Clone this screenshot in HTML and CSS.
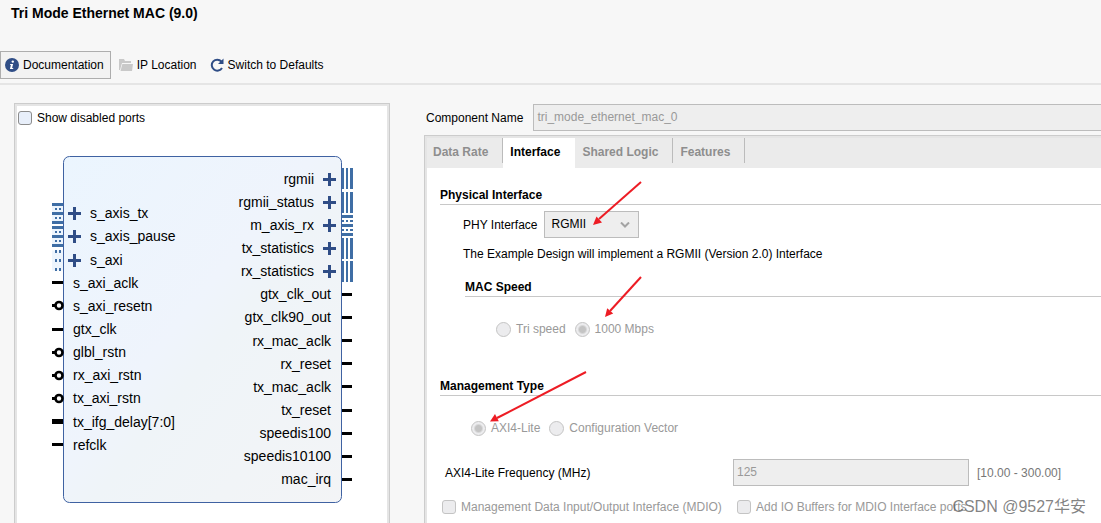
FILE: index.html
```
<!DOCTYPE html>
<html lang="en">
<head>
<meta charset="utf-8">
<title>Tri Mode Ethernet MAC (9.0)</title>
<link rel="stylesheet" href="styles.css">
</head>
<body>
<header class="header">
  <h1 class="title">Tri Mode Ethernet MAC (9.0)</h1>
  <nav class="toolbar">
    <button class="tool tool-active" type="button">
      <svg class="icon" viewBox="0 0 14 14"><circle cx="7" cy="7" r="7" fill="#2f4d86"/><circle cx="7.8" cy="3.6" r="1.2" fill="#fff"/><path d="M5.3 6h2.8l-1 4h1.1v1H4.9l1-4H5z" fill="#fff"/></svg>
      Documentation
    </button>
    <button class="tool" type="button">
      <svg class="icon" viewBox="0 0 14 14"><path d="M0 12V1h5l1 2h6v2H3L1 12z" fill="#c9c9c9"/><path d="M3.4 6H14l-1 7H1.500z" fill="#c9c9c9"/></svg>
      IP Location
    </button>
    <button class="tool" type="button">
      <svg class="icon" viewBox="0 0 14 14"><path d="M11.400 3.500A5.500 5.500 0 1 0 12 10" fill="none" stroke="#2f4d86" stroke-width="2"/><path d="M13.500 0.500V6H8z" fill="#2f4d86"/></svg>
      Switch to Defaults
    </button>
  </nav>
</header>

<main class="main">
  <section class="ports-panel">
    <label class="check ports-toggle"><input type="checkbox"> Show disabled ports</label>
    <svg class="diagram" viewBox="0 0 370 380" role="img" aria-label="Block symbol">
      <defs>
        <linearGradient id="block" x1="0" y1="0" x2="1" y2="1">
          <stop offset="0" stop-color="#ebf5fe"/><stop offset="0.45" stop-color="#eff4fc"/><stop offset="0.55" stop-color="#eff4f8"/><stop offset="1" stop-color="#f3f4f6"/>
        </linearGradient>
        <g id="plus"><path d="M-6.500 0H6.500M0 -6.500V6.500" stroke="#2f4d86" stroke-width="3"/></g>
        <g id="pin"><path d="M0 0H10" stroke="#000" stroke-width="3"/></g>
        <g id="inverted"><path d="M0 0H4" stroke="#000" stroke-width="3"/><circle cx="7" cy="0" r="3.500" fill="#fff" stroke="#000" stroke-width="2.600"/></g>
        <g id="stream"><path d="M0 -10.500h11v21H0z" fill="#edf5fd"/><path d="M0 -9h11M0 0h11M0 9h11" stroke="#3f6ea5" stroke-width="3"/><path d="M3 -4.500h6M3 4.500h6" stroke="#3f6ea5" stroke-width="2" stroke-dasharray="2 2"/></g>
        <g id="mapped"><path d="M0 -10h11v20H0z" fill="#edf5fd"/><path d="M3 -9h6M3 0h6M3 9h6" stroke="#3f6ea5" stroke-width="3" stroke-dasharray="2 2"/></g>
        <g id="bus"><path d="M0 -10.500h2v21H0zM4 -10.500h2v21H4zM8 -10.500h3v21H8z" fill="#3f6ea5"/></g>
        <g id="stream-out"><path d="M0 -9h11M0 0h11M0 9h11" stroke="#3f6ea5" stroke-width="3"/><path d="M0 -4.500h2M4 -4.500h2M8 -4.500h3M0 4.500h2M4 4.500h2M8 4.500h3" stroke="#3f6ea5" stroke-width="2"/></g>
      </defs>
      <rect x="46.500" y="28.500" width="278" height="346" rx="6" fill="url(#block)" stroke="#3f62a2"/>
      <use href="#stream" x="35" y="85.500"/><use href="#stream" x="35" y="108.500"/><use href="#mapped" x="35" y="132.500"/>
      <use href="#plus" x="57.500" y="85.500"/><use href="#plus" x="57.500" y="108.500"/><use href="#plus" x="57.500" y="132.500"/>
      <path d="M35 154.500h11M35 201.500h11M35 316.500h11" stroke="#000" stroke-width="3"/>
      <use href="#inverted" x="35" y="177.500"/><use href="#inverted" x="35" y="224.500"/><use href="#inverted" x="35" y="247.500"/><use href="#inverted" x="35" y="270.500"/>
      <path d="M35 293.500h11" stroke="#000" stroke-width="5"/>
      <g class="port">
        <text x="73" y="90">s_axis_tx</text><text x="73" y="113">s_axis_pause</text><text x="73" y="137">s_axi</text>
        <text x="56" y="160">s_axi_aclk</text><text x="56" y="183">s_axi_resetn</text><text x="56" y="206">gtx_clk</text><text x="56" y="229">glbl_rstn</text><text x="56" y="252">rx_axi_rstn</text><text x="56" y="275">tx_axi_rstn</text><text x="56" y="299">tx_ifg_delay[7:0]</text><text x="56" y="322">refclk</text>
      </g>
      <g class="port port-out">
        <text x="297" y="56">rgmii</text><text x="297" y="79">rgmii_status</text><text x="297" y="102">m_axis_rx</text><text x="297" y="125">tx_statistics</text><text x="297" y="148">rx_statistics</text>
        <text x="314" y="171">gtx_clk_out</text><text x="314" y="194">gtx_clk90_out</text><text x="314" y="218">rx_mac_aclk</text><text x="314" y="241">rx_reset</text><text x="314" y="264">tx_mac_aclk</text><text x="314" y="287">tx_reset</text><text x="314" y="310">speedis100</text><text x="314" y="333">speedis10100</text><text x="314" y="356">mac_irq</text>
      </g>
      <use href="#plus" x="312.500" y="51.500"/><use href="#plus" x="312.500" y="74.500"/><use href="#plus" x="312.500" y="97.500"/><use href="#plus" x="312.500" y="120.500"/><use href="#plus" x="312.500" y="143.500"/>
      <use href="#bus" x="325" y="50.500"/><use href="#bus" x="325" y="74.500"/><use href="#stream-out" x="325" y="97.500"/><use href="#bus" x="325" y="120.500"/><use href="#bus" x="325" y="143.500"/>
      <use href="#pin" x="325" y="166.500"/><use href="#pin" x="325" y="189.500"/><use href="#pin" x="325" y="212.500"/><use href="#pin" x="325" y="235.500"/><use href="#pin" x="325" y="258.500"/><use href="#pin" x="325" y="282.500"/><use href="#pin" x="325" y="305.500"/><use href="#pin" x="325" y="328.500"/><use href="#pin" x="325" y="351.500"/>
    </svg>
  </section>

  <form class="config">
    <div class="name-row">
      <label for="component">Component Name</label>
      <input class="field name-field" id="component" type="text" value="tri_mode_ethernet_mac_0" disabled>
    </div>
    <div class="tab-panel">
      <div class="tabs" role="tablist">
        <button class="tab tab-ruled" type="button" role="tab">Data Rate</button>
        <button class="tab tab-selected" type="button" role="tab" aria-selected="true">Interface</button>
        <button class="tab tab-ruled" type="button" role="tab">Shared Logic</button>
        <button class="tab tab-ruled" type="button" role="tab">Features</button>
      </div>
      <div class="settings">
        <section>
          <h2 class="heading">Physical Interface</h2>
          <div class="phy-row">
            <label for="phy">PHY Interface</label>
            <span class="select-wrap">
              <select class="select" id="phy"><option>RGMII</option></select>
              <svg class="chevron" viewBox="0 0 10 6"><path d="M1 0.500L5 4.500L9 0.500" fill="none" stroke="#a3a3a3" stroke-width="2"/></svg>
            </span>
          </div>
          <p class="note">The Example Design will implement a RGMII (Version 2.0) Interface</p>
          <div class="speed">
            <h2 class="heading">MAC Speed</h2>
            <div class="choices">
              <label class="check muted"><input type="radio" name="speed" disabled> Tri speed</label>
              <label class="check muted"><input type="radio" name="speed" checked disabled> 1000 Mbps</label>
            </div>
          </div>
        </section>
        <section class="management">
          <h2 class="heading">Management Type</h2>
          <div class="choices">
            <label class="check muted"><input type="radio" name="management" checked disabled> AXI4-Lite</label>
            <label class="check muted"><input type="radio" name="management" disabled> Configuration Vector</label>
          </div>
          <div class="grid">
            <label class="freq-label" for="freq">AXI4-Lite Frequency (MHz)</label>
            <div class="freq"><input class="field freq-field" id="freq" type="text" value="125" disabled><span class="range">[10.00 - 300.00]</span></div>
            <label class="check muted"><input type="checkbox" disabled> Management Data Input/Output Interface (MDIO)</label>
            <label class="check muted mdio"><input type="checkbox" disabled> Add IO Buffers for MDIO Interface ports</label>
          </div>
        </section>
      </div>
    </div>
    <svg class="arrows" viewBox="0 0 240 300" aria-hidden="true">
      <g stroke="#ed1c24" stroke-width="2" fill="#ed1c24">
        <path d="M217 79L175 116"/><path d="M169 122L172.500 113.500L178 119.500Z" stroke="none"/>
        <path d="M217 174L186 208"/><path d="M181 214L183.200 205.200L189.200 210.500Z" stroke="none"/>
        <path d="M162 269L73 315"/><path d="M66 318.500L71 311L74.800 318.200Z" stroke="none"/>
      </g>
    </svg>
  </form>
</main>
<div class="watermark">CSDN @9527华安</div>
</body>
</html>
```

FILE: styles.css
```
* { box-sizing: border-box; }

body {
  margin: 0;
  height: 100vh;
  overflow: hidden;
  display: flex;
  flex-direction: column;
  background: #f7f7f7;
  color: #000;
  font: 12px/16px "Liberation Sans", Arial, sans-serif;
}

button, input, select { font: inherit; color: inherit; }
h1, h2, p { margin: 0; }

.header { border-bottom: 2px solid #e5e5e5; padding: 5px 0 4px; }
.title { font-size: 14px; line-height: 16px; margin: 0 11px 30px; }

.toolbar { display: flex; gap: 3px; }
.tool {
  display: flex;
  align-items: center;
  gap: 4px;
  height: 28px;
  padding: 0 4px;
  border: 1px solid transparent;
  background: none;
}
.tool-active { background: #f2f2f2; border-color: #adadad; padding-right: 6px; }
.icon { width: 14px; height: 14px; }

.main { flex: 1; min-height: 0; display: flex; gap: 34px; padding: 18px 0 0 14px; }

.ports-panel {
  flex: 0 0 376px;
  padding: 4px 0 0 1px;
  background: #fff;
  border: 1px solid #ccc;
  border-bottom: 0;
  box-shadow: inset 0 2px #e5e5e5, inset 2px 0 #e5e5e5, inset -2px 0 #e5e5e5;
}
.ports-toggle { margin-left: 2px; }
.diagram { display: block; width: 370px; height: 380px; margin-left: 1px; }
.port { font-size: 14px; }
.port-out { text-anchor: end; }

.check { display: flex; align-items: center; gap: 5px; min-height: 20px; }
.check input {
  appearance: none;
  flex: none;
  width: 14px;
  height: 14px;
  margin: 0;
  border: 1px solid #8c8c8c;
  border-radius: 3px;
  background: #e8effa;
}
.check input:disabled { border-color: #c4c4c4; background: #ececee; }
.check input[type="radio"] { width: 15px; height: 15px; border-radius: 50%; }
.check input[type="radio"]:checked {
  background: radial-gradient(circle, #c4c4c4 0 3px, #ececee 5px);
}
.muted { color: #999; }

.config { position: relative; flex: 1; min-width: 0; display: flex; flex-direction: column; }
.name-row { display: flex; align-items: center; gap: 10px; padding-left: 2px; margin: 1px 0 4px; }
.field {
  height: 27px;
  padding: 0 3px 2px;
  border: 1px solid #bcbcbc;
  border-radius: 0;
  background: #eee;
  color: #999;
}
.name-field { flex: 1; min-width: 0; border-right: 0; }

.tab-panel {
  flex: 1;
  background: #fff;
  border: 1px solid #ccc;
  border-width: 1px 0 0 1px;
  box-shadow: inset 2px 2px #e5e5e5;
  padding: 2px 0 0 2px;
}
.tabs { display: flex; height: 30px; background: #ebebeb; }
.tab {
  position: relative;
  padding: 0 15px 2px 7px;
  border: 0;
  background: none;
  color: #8e8e8e;
  font-weight: bold;
}
.tab:first-child { padding-left: 6px; }
.tab-ruled::after { content: ""; position: absolute; top: 0; right: 0; width: 1px; height: 25px; background: #bbb; }
.tab-selected { background: #fff; color: #000; }

.settings { padding: 19px 0 0 13px; }
.heading { font-size: 12px; line-height: 16px; padding-bottom: 1px; border-bottom: 1px solid #c8c8c8; }
.phy-row { display: flex; align-items: center; gap: 7px; padding: 6px 0 0 23px; }
.select-wrap { position: relative; }
.select {
  appearance: none;
  display: block;
  width: 95px;
  height: 27px;
  padding: 0 6px 2px;
  border: 1px solid #bcbcbc;
  border-radius: 0;
  background: #eee;
}
.chevron { position: absolute; right: 9px; top: 11px; width: 10px; height: 6px; pointer-events: none; }
.note { padding: 8px 0 0 23px; }
.speed { padding: 17px 0 0 25px; }
.choices { display: flex; gap: 9px; padding: 22px 0 0 31px; }
.management { padding-top: 39px; }
.grid {
  display: grid;
  grid-template-columns: 293px 1fr;
  align-items: center;
  row-gap: 11px;
  padding-top: 21px;
}
.freq-label { padding-left: 5px; }
.freq { display: flex; align-items: center; gap: 8px; }
.freq-field { width: 236px; }
.range { color: #777; }
.grid .check { padding-left: 2px; }
.grid .mdio { padding-left: 4px; }

.arrows { position: absolute; left: 0; top: 0; width: 240px; height: 300px; overflow: visible; pointer-events: none; }

.watermark {
  position: absolute;
  right: 15px;
  bottom: 6px;
  color: rgba(90, 90, 90, 0.75);
  font: 16px/20px "Liberation Sans", "Noto Sans CJK SC", sans-serif;
}
```
